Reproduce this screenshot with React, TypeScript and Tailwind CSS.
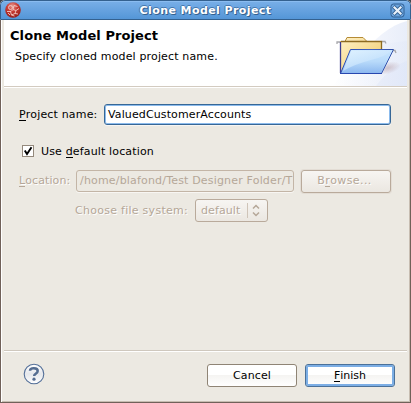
import React from "react";

const disabledText = "text-[#b5a798] [text-shadow:1px_1px_0_#ffffff]";
const mnemonic = "inline-block h-[13px] border-b border-current leading-[13px]";

function AppIcon() {
  return (
    <svg width="16" height="16" viewBox="0 0 16 16">
      <defs>
        <radialGradient id="ball" cx="45%" cy="25%" r="75%">
          <stop offset="0" stopColor="#e79a91" />
          <stop offset=".45" stopColor="#c93c34" />
          <stop offset="1" stopColor="#971c18" />
        </radialGradient>
      </defs>
      <circle cx="8" cy="8" r="7.8" fill="url(#ball)" />
      <g fill="none" stroke="#f3c9c4" strokeWidth=".9">
        <circle cx="5.500" cy="5.500" r="2" />
        <path d="M2 9.500h4l2-2 3 1 3-2M8 7.500l1-4 3.500 1M5.500 9.500l1 3.500 3 1M11 8.500l-1 3-3.500 1.500M10 11.500l3 .5M3 11l2 2" />
      </g>
    </svg>
  );
}

function CloseIcon() {
  return (
    <svg width="15" height="15" viewBox="0 0 15 15">
      <rect x="1" y="1" width="13" height="13" rx="2.500" fill="#6ba3dd" stroke="#315f91" />
      <path d="M4.800 4.800l5.400 5.400M10.200 4.800l-5.400 5.400" stroke="#315f91" strokeWidth="4" strokeLinecap="square" />
      <path d="M4.500 4.500l6 6M10.500 4.500l-6 6" stroke="#e9f1fa" strokeWidth="2.200" strokeLinecap="square" />
    </svg>
  );
}

function FolderArt() {
  return (
    <svg width="75" height="66" viewBox="332 20 75 66">
      <defs>
        <linearGradient id="sweep" x1="0" x2="1">
          <stop offset="0" stopColor="#ffffff" />
          <stop offset="1" stopColor="#dfe6f7" />
        </linearGradient>
        <linearGradient id="back" x1="0" y1="0" x2="1" y2="1">
          <stop offset="0" stopColor="#fff1c7" />
          <stop offset="1" stopColor="#efc965" />
        </linearGradient>
        <linearGradient id="front" x1="0" y1="0" x2="0" y2="1">
          <stop offset="0" stopColor="#cbe7ff" />
          <stop offset=".5" stopColor="#b8dafa" />
          <stop offset="1" stopColor="#8bb7ef" />
        </linearGradient>
        <linearGradient id="shine" x1="0" y1="0" x2="1" y2="1">
          <stop offset="0" stopColor="#e9f7ff" />
          <stop offset="1" stopColor="#b5d8fb" />
        </linearGradient>
        <linearGradient id="outline" x1="0" x2="1">
          <stop offset="0" stopColor="#2547b2" />
          <stop offset=".6" stopColor="#4563bd" />
          <stop offset="1" stopColor="#3050a8" />
        </linearGradient>
        <radialGradient id="shadow">
          <stop offset="0" stopColor="#bda9b4" stopOpacity=".65" />
          <stop offset="1" stopColor="#bda9b4" stopOpacity="0" />
        </radialGradient>
      </defs>
      <path d="M407 21C390 25 374 39 360 57L332 86H407Z" fill="url(#sweep)" opacity=".7" />
      <path d="M407 61C397 64 386 73 376 86H407Z" fill="#dce4f7" opacity=".5" />
      <path d="M365 50Q387 42 407 41V86H332Q350 63 365 50Z" fill="url(#sweep)" opacity=".35" />
      <ellipse cx="388" cy="68" rx="13" ry="6" fill="url(#shadow)" transform="rotate(-15 388 68)" />
      <path d="M337 44v-2h3M382 41.500h3l1 2M347 53v-2h3M393 50.500h2l1 2.500" fill="none" stroke="#a8a8ac" strokeWidth="1.300" />
      <path d="M340.500 73V41.500h4.500L347 37.500h16l4 4H381.500V68Z" fill="url(#back)" stroke="#b58b35" />
      <path d="M340.500 73V42" stroke="#3c3e93" strokeWidth="1.300" />
      <path d="M341 41.500h5M345 41.500h36.500v8" fill="none" stroke="#8c6a20" strokeWidth="1.300" />
      <path d="M340.500 73.500L350.500 49.500H393.500L381.500 73.500Z" fill="url(#front)" stroke="url(#outline)" />
      <path d="M343 71L351.500 50.500H391Q387 56 371 60T343 71Z" fill="url(#shine)" opacity=".7" />
      <path d="M340 73.500h42" stroke="#2746af" />
    </svg>
  );
}

function HelpIcon() {
  return (
    <svg width="22" height="22" viewBox="0 0 22 22">
      <defs>
        <linearGradient id="help" x1="0" y1="0" x2="0" y2="1">
          <stop offset="0" stopColor="#fff" />
          <stop offset=".5" stopColor="#e5e7eb" />
          <stop offset="1" stopColor="#fff" />
        </linearGradient>
      </defs>
      <circle cx="11" cy="11" r="9.800" fill="url(#help)" stroke="#536f98" strokeWidth="1.100" />
      <path d="M7 7.800C7.200 4.300 14.700 4.400 14.700 8c0 2.800-3.600 2.700-3.600 5" fill="none" stroke="#556d91" strokeWidth="2.500" />
      <circle cx="11" cy="16.200" r="1.600" fill="#556d91" />
    </svg>
  );
}

export default function App() {
  return (
    <div className="h-[403px] w-[411px] overflow-hidden bg-[#3d4650] font-['DejaVu_Sans',sans-serif] text-[11px] leading-[14px] text-black">
      <div className="flex h-[403px] w-[411px] flex-col overflow-hidden rounded-t-[5px] bg-[#ece9e2]">
        <header className="flex h-5 shrink-0 items-center justify-between rounded-t-[5px] border border-[#34618f] bg-linear-to-b from-[#79afe8] to-[#5496d7] pl-1 pr-[5px] shadow-[inset_0_1px_0_#8abcf0]">
          <AppIcon />
          <h1 className="whitespace-nowrap pt-px text-[11px] font-bold tracking-[0.42px] text-white [text-shadow:1px_1px_0_#34618f,-1px_0_0_#4478ae,0_-1px_0_#4478ae]">Clone Model Project</h1>
          <CloseIcon />
        </header>
        <div className="flex min-h-0 flex-1 flex-col border-x border-b border-[#706159] px-[3px] shadow-[inset_1px_0_0_#fff,inset_-1px_-1px_0_#c7bdb1]">
          <section className="flex h-[66px] shrink-0 justify-between bg-white">
            <div className="pl-[6px] pt-[8px]">
              <h2 className="whitespace-nowrap text-[13px] font-bold leading-4 tracking-[0.08px]">Clone Model Project</h2>
              <p className="whitespace-nowrap pl-[5px] pt-[6px] tracking-[0.15px]">Specify cloned model project name.</p>
            </div>
            <FolderArt />
          </section>
          <div className="h-[2px] shrink-0 border-b border-white bg-[#d3cbc0]" />

          <main className="flex-1 pl-[15px] pr-[16px] pt-[16px]">
            <div className="flex h-[21px] items-center">
              <label className="w-[85px] shrink-0 whitespace-nowrap tracking-[0.17px]"><span className={mnemonic}>P</span>roject name:</label>
              <div className="flex h-[21px] flex-1 items-center rounded-[3px] border border-[#376796] bg-white pl-[3px] tracking-[0.12px] shadow-[inset_0_0_0_1px_#8bbbed,0_1px_0_#f8f6f3]">ValuedCustomerAccounts</div>
            </div>
            <div className="mt-[20px] flex h-[14px] items-center pl-[3px]">
              <svg className="mb-[2px]" width="12" height="12" viewBox="0 0 12 12">
                <rect x=".5" y=".5" width="11" height="11" fill="white" stroke="#94897c" />
                <path d="M2.800 5.500l2.200 3.500L9.500 2.300" fill="none" stroke="black" strokeWidth="1.900" />
              </svg>
              <span className="ml-[7px] tracking-[0.15px]">Use <span className={mnemonic}>d</span>efault location</span>
            </div>
            <div className={"mt-[10px] flex h-6 items-center " + disabledText}>
              <span className="w-[57px] shrink-0 tracking-[0.1px]"><span className={mnemonic}>L</span>ocation:</span>
              <div className="flex h-[22px] w-[218px] shrink-0 items-center rounded-[3px] border border-[#c3b5a6] pl-[3px] shadow-[0_1px_0_#f8f6f3]">
                <span className="whitespace-nowrap tracking-[0.18px] [text-shadow:none]">/home/blafond/Test Designer Folder/T</span>
              </div>
              <button className="ml-[7px] h-[23px] w-[90px] rounded-[3px] border border-[#b9aa9b] bg-linear-to-b from-[#f7f5f2] to-[#ebe7e1] pr-[3px] tracking-[0.4px] shadow-[0_0_0_1px_#e3ddd5] [text-shadow:1px_1px_0_#fff]">B<span className={mnemonic}>r</span>owse...</button>
            </div>
            <div className={"mt-[6px] flex h-[23px] items-center pl-[57px] " + disabledText}>
              <span className="-ml-px w-[120px] whitespace-nowrap tracking-[0.27px]">Choose file system:</span>
              <div className="flex h-[23px] w-[73px] items-center rounded-[3px] border border-[#b9aa9b] bg-linear-to-b from-[#f7f5f2] to-[#ebe7e1] pl-[5px]">
                <span className="tracking-[0.1px]">default</span>
                <svg className="ml-auto mr-[3px]" width="17" height="17" viewBox="0 0 17 17" fill="none">
                  <path d="M.5 1v15" stroke="#cfc4b8" />
                  <path d="M6 6.500L9 3.500l3 3M6 10.500l3 3 3-3" stroke="#b5a798" strokeWidth="1.500" />
                </svg>
              </div>
            </div>
          </main>

          <footer className="h-[52px] shrink-0 border-t border-[#cfc8be] pt-[13px] shadow-[inset_0_1px_0_#fff]">
            <div className="flex h-[23px] items-start pl-[19px] pr-[12px]">
              <div className="-mt-px"><HelpIcon /></div>
              <button className="ml-auto h-[23px] w-[90px] rounded-[3px] border border-[#8f8475] bg-[linear-gradient(#fff_0_48%,#f5f4f2_50%,#fff)] tracking-[0.15px]">Cancel</button>
              <button className="ml-[8px] h-[23px] w-[90px] rounded-[3px] border border-[#4b7199] bg-[linear-gradient(#fff_0_48%,#f5f4f2_50%,#fff)] shadow-[inset_0_0_0_2px_#7caee5]"><span className={mnemonic}>F</span>inish</button>
            </div>
          </footer>
        </div>
      </div>
    </div>
  );
}
